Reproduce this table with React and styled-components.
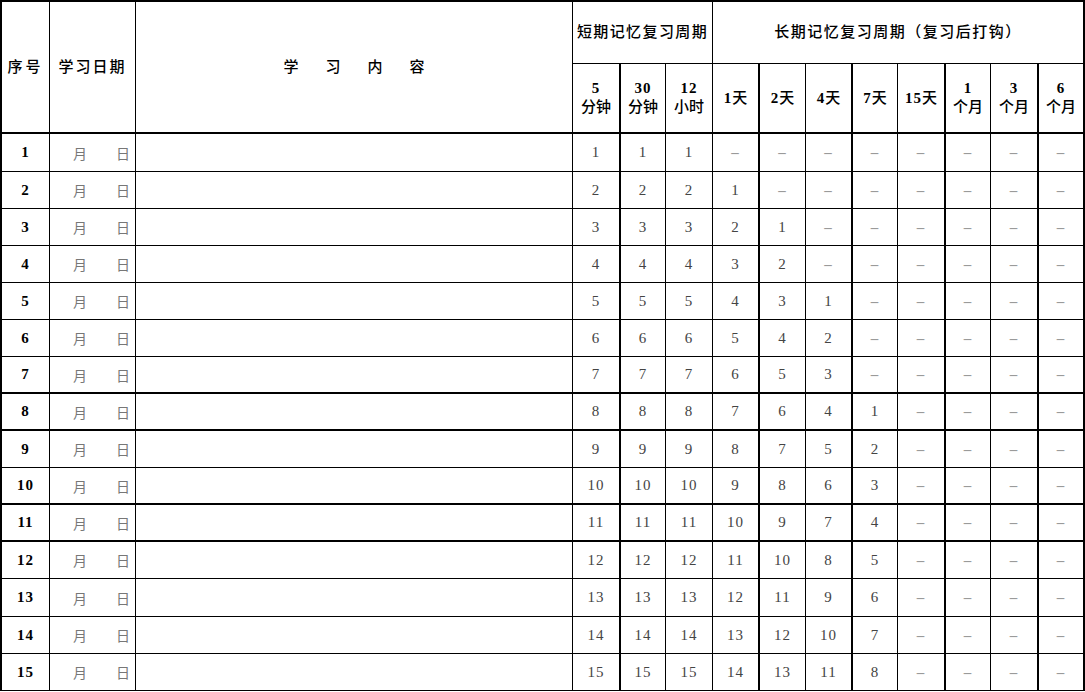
import React from 'react';
import styled, { createGlobalStyle } from 'styled-components';

const Global = createGlobalStyle`
  * { box-sizing: border-box; }
  html, body { margin: 0; padding: 0; background: #fff; }
  body { font-family: "Liberation Serif", "Noto Sans CJK SC", serif; color: #000; }
`;

const Sheet = styled.table`
  width: 1085px;
  table-layout: fixed;
  border-collapse: separate;
  border-spacing: 0;
  border-top: 2px solid #000;
  border-left: 2px solid #000;
`;

const Col = styled.col`
  width: ${p => p.$w}px;
`;

const Cell = styled.td`
  border-right: ${p => (p.$thickR ? 2 : 1)}px solid #000;
  border-bottom: ${p => (p.$thickB ? 2 : 1)}px solid #000;
  padding: 0;
  text-align: center;
  vertical-align: middle;
  overflow: hidden;
  white-space: nowrap;
`;

const HeadCell = styled(Cell).attrs({ as: 'th' })`
  font-family: "Liberation Serif", "Noto Sans CJK SC", serif;
  font-size: 15px;
  font-weight: 500;
  line-height: 19px;
  letter-spacing: ${p => p.$ls || 0}px;
  color: #000;
`;

const HeadRow = styled.tr`
  height: ${p => p.$h}px;
`;

const Spread = styled.div`
  display: flex;
  justify-content: center;
  gap: ${p => p.$gap}px;
`;

const Num = styled.span`
  font-weight: bold;
  font-size: 15px;
  letter-spacing: 1px;
`;

const Stack = styled.div`
  display: flex;
  flex-direction: column;
  align-items: center;
  line-height: 19px;
`;

const Row = styled.tr`
  height: ${p => p.$h}px;
`;

const IndexCell = styled(Cell)`
  font-weight: bold;
  font-size: 15px;
  letter-spacing: 1px;
`;

const DateCell = styled(Cell)`
  text-align: right;
  padding-right: 5px;
  font-family: "Noto Sans CJK SC", sans-serif;
  font-size: 14px;
  color: #777;
`;

const Month = styled.span`
  margin-right: 29px;
`;

const ValueCell = styled(Cell)`
  font-size: 15px;
  letter-spacing: 1px;
  font-weight: ${p => (p.$dash ? 'bold' : 'normal')};
  color: ${p => (p.$dash ? '#9a9a9a' : '#444')};
`;

const widths = [48, 86, 437, 48, 45, 47, 47, 46, 47, 45, 48, 45, 48, 46];
const thickCols = new Set([3, 6, 8, 10, 12, 13]);
const longOffsets = [1, 2, 4, 7, 15, 30, 90, 180];
const thickRows = new Set([7, 8, 10, 11]);

const shortHeads = [
  ['5', '分钟'],
  ['30', '分钟'],
  ['12', '小时'],
];
const longHeads = [
  ['1', '天'],
  ['2', '天'],
  ['4', '天'],
  ['7', '天'],
  ['15', '天'],
  ['1', '个月', true],
  ['3', '个月', true],
  ['6', '个月', true],
];

export default function App() {
  const rows = Array.from({ length: 15 }, (_, i) => i + 1);
  return (
    <>
      <Global />
      <Sheet>
        <colgroup>
          {widths.map((w, i) => (
            <Col key={i} $w={w} />
          ))}
        </colgroup>
        <thead>
          <HeadRow $h={62}>
            <HeadCell rowSpan={2} $thickB $ls={3}>序号</HeadCell>
            <HeadCell rowSpan={2} $thickB $ls={2}>学习日期</HeadCell>
            <HeadCell rowSpan={2} $thickB>
              <Spread $gap={27}>
                <span>学</span>
                <span>习</span>
                <span>内</span>
                <span>容</span>
              </Spread>
            </HeadCell>
            <HeadCell colSpan={3} $ls={1.4}>短期记忆复习周期</HeadCell>
            <HeadCell colSpan={11} $thickR $ls={1.5}>长期记忆复习周期（复习后打钩）</HeadCell>
          </HeadRow>
          <HeadRow $h={70}>
            {shortHeads.map(([n, u], i) => (
              <HeadCell key={'s' + i} $thickB $thickR={thickCols.has(3 + i)}>
                <Stack>
                  <Num>{n}</Num>
                  <span>{u}</span>
                </Stack>
              </HeadCell>
            ))}
            {longHeads.map(([n, u, stacked], i) => (
              <HeadCell key={'l' + i} $thickB $thickR={thickCols.has(6 + i)}>
                {stacked ? (
                  <Stack>
                    <Num>{n}</Num>
                    <span>{u}</span>
                  </Stack>
                ) : (
                  <span>
                    <Num>{n}</Num>
                    {u}
                  </span>
                )}
              </HeadCell>
            ))}
          </HeadRow>
        </thead>
        <tbody>
          {rows.map(n => {
            const tb = thickRows.has(n);
            const h = n === 1 || n === 13 ? 38 : 37;
            return (
              <Row key={n} $h={h}>
                <IndexCell $thickB={tb}>{n}</IndexCell>
                <DateCell $thickB={tb}>
                  <Month>月</Month>
                  <span>日</span>
                </DateCell>
                <Cell $thickB={tb} />
                {[0, 1, 2].map(k => (
                  <ValueCell key={'s' + k} $thickB={tb} $thickR={thickCols.has(3 + k)}>
                    {n}
                  </ValueCell>
                ))}
                {longOffsets.map((o, k) => {
                  const v = n - o;
                  const dash = v < 1;
                  return (
                    <ValueCell key={'l' + k} $dash={dash} $thickB={tb} $thickR={thickCols.has(6 + k)}>
                      {dash ? '–' : v}
                    </ValueCell>
                  );
                })}
              </Row>
            );
          })}
        </tbody>
      </Sheet>
    </>
  );
}
